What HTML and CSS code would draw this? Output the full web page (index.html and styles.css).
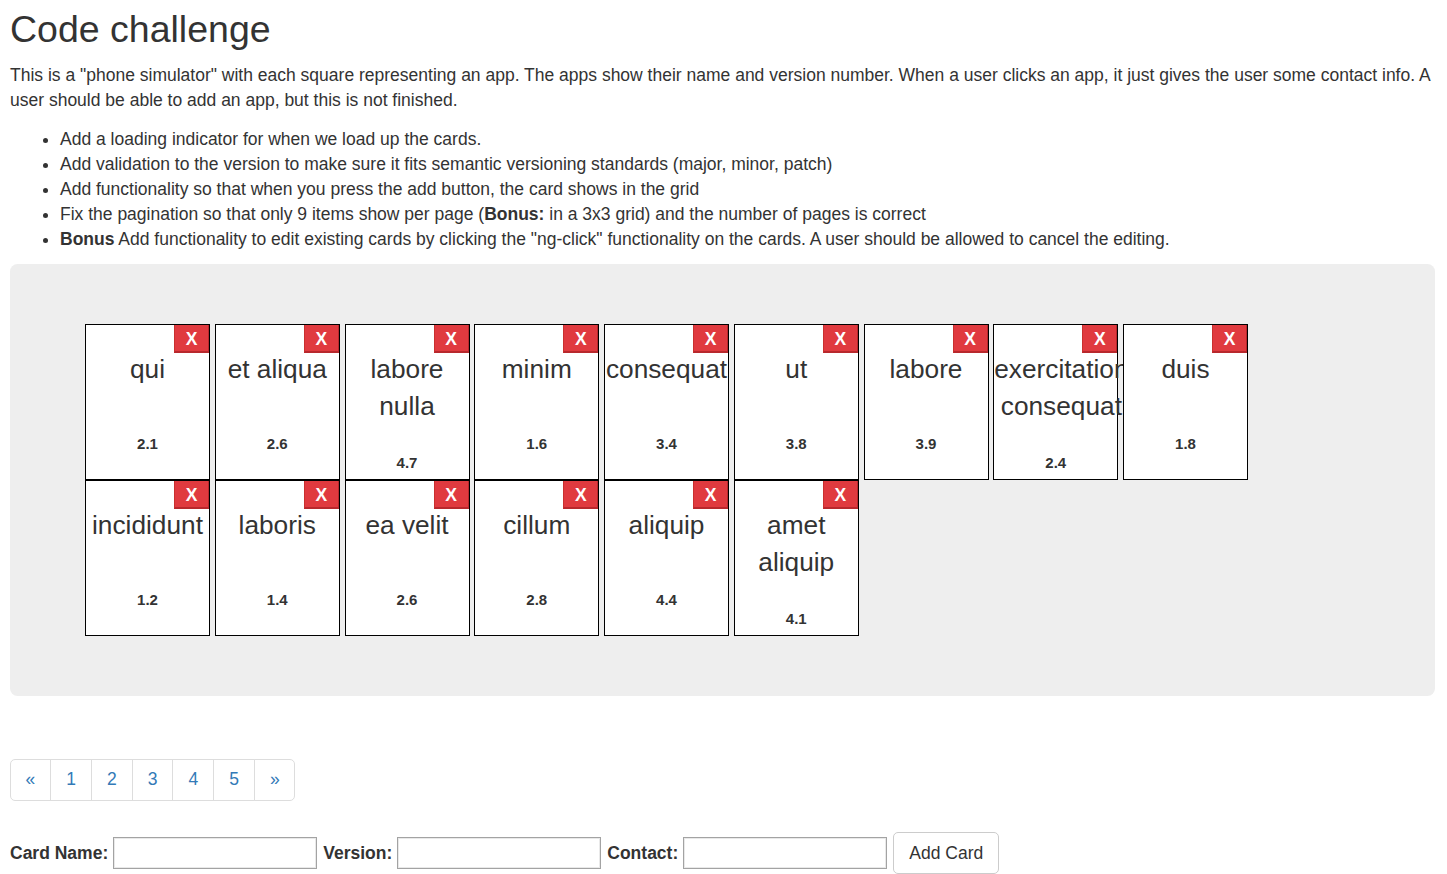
FILE: index.html
```html
<!DOCTYPE html>
<html lang="en">
<head>
<meta charset="utf-8">
<title>Code challenge</title>
<link rel="stylesheet" href="styles.css">
</head>
<body>
<h1 class="title">Code challenge</h1>
<p class="intro">This is a "phone simulator" with each square representing an app. The apps show their name and version number. When a user clicks an app, it just gives the user some contact info. A user should be able to add an app, but this is not finished.</p>
<ul class="tasks">
  <li>Add a loading indicator for when we load up the cards.</li>
  <li>Add validation to the version to make sure it fits semantic versioning standards (major, minor, patch)</li>
  <li>Add functionality so that when you press the add button, the card shows in the grid</li>
  <li>Fix the pagination so that only 9 items show per page (<b>Bonus:</b> in a 3x3 grid) and the number of pages is correct</li>
  <li><b>Bonus</b> Add functionality to edit existing cards by clicking the "ng-click" functionality on the cards. A user should be allowed to cancel the editing.</li>
</ul>

<div class="board">
  <div class="cards">
    <div class="card"><button class="delete">X</button><div class="card-name">qui</div><div class="card-version">2.1</div></div>
    <div class="card"><button class="delete">X</button><div class="card-name">et aliqua</div><div class="card-version">2.6</div></div>
    <div class="card"><button class="delete">X</button><div class="card-name">labore nulla</div><div class="card-version">4.7</div></div>
    <div class="card"><button class="delete">X</button><div class="card-name">minim</div><div class="card-version">1.6</div></div>
    <div class="card"><button class="delete">X</button><div class="card-name">consequat</div><div class="card-version">3.4</div></div>
    <div class="card"><button class="delete">X</button><div class="card-name">ut</div><div class="card-version">3.8</div></div>
    <div class="card"><button class="delete">X</button><div class="card-name">labore</div><div class="card-version">3.9</div></div>
    <div class="card"><button class="delete">X</button><div class="card-name">exercitation consequat</div><div class="card-version">2.4</div></div>
    <div class="card"><button class="delete">X</button><div class="card-name">duis</div><div class="card-version">1.8</div></div>
    <div class="card"><button class="delete">X</button><div class="card-name">incididunt</div><div class="card-version">1.2</div></div>
    <div class="card"><button class="delete">X</button><div class="card-name">laboris</div><div class="card-version">1.4</div></div>
    <div class="card"><button class="delete">X</button><div class="card-name">ea velit</div><div class="card-version">2.6</div></div>
    <div class="card"><button class="delete">X</button><div class="card-name">cillum</div><div class="card-version">2.8</div></div>
    <div class="card"><button class="delete">X</button><div class="card-name">aliquip</div><div class="card-version">4.4</div></div>
    <div class="card"><button class="delete">X</button><div class="card-name">amet aliquip</div><div class="card-version">4.1</div></div>
  </div>
</div>

<ul class="pagination">
  <li><a href="#">&laquo;</a></li>
  <li><a href="#">1</a></li>
  <li><a href="#">2</a></li>
  <li><a href="#">3</a></li>
  <li><a href="#">4</a></li>
  <li><a href="#">5</a></li>
  <li><a href="#">&raquo;</a></li>
</ul>

<form class="add-form">
  <label class="field-label" for="name">Card Name:</label>
  <input class="field-input" id="name" type="text">
  <label class="field-label" for="version">Version:</label>
  <input class="field-input" id="version" type="text">
  <label class="field-label" for="contact">Contact:</label>
  <input class="field-input" id="contact" type="text">
  <button class="add-btn" type="button">Add Card</button>
</form>
</body>
</html>
```

FILE: styles.css
```css
html, body {
  background: #fff;
}
body {
  margin: 0;
  padding: 9px 12px 0 10px;
  font-family: "Liberation Sans", Arial, Helvetica, sans-serif;
  font-size: 17.5px;
  line-height: 25px;
  color: #333;
}
.title {
  margin: 0 0 12.5px;
  font-size: 37.5px;
  font-weight: 500;
  line-height: 1.1;
}
.intro {
  margin: 0 0 14.5px;
}
.tasks {
  margin: 0 0 12px;
  padding-left: 50px;
}
.board {
  background: #eee;
  border-radius: 7.5px;
  padding: 60px 75px;
  margin-bottom: 0;
}
.cards {
  display: flex;
  flex-wrap: wrap;
  column-gap: 4.75px;
}
.card {
  position: relative;
  box-sizing: border-box;
  width: 125px;
  height: 156px;
  border: 1px solid #000;
  background: #fff;
  display: flex;
  flex-direction: column;
  text-align: center;
  font-size: 26.25px;
  line-height: 37.5px;
}
.delete {
  position: absolute;
  top: 0;
  right: 0;
  box-sizing: border-box;
  width: 35px;
  height: 28px;
  margin: 0;
  padding: 0;
  border: 0;
  border-right: 1px solid #b8282d;
  border-bottom: 2px solid #b8282d;
  border-left: 1px solid #c9302f;
  background: #e03a3f;
  color: #fff;
  font-family: "Liberation Sans", Arial, sans-serif;
  font-size: 17.5px;
  font-weight: bold;
  line-height: 28px;
  text-align: center;
}
.card-name {
  padding-top: 25.6px;
  min-width: min-content;
}
.card-version {
  margin: auto 0;
  padding-top: 20px;
  font-size: 15px;
  line-height: 21.4px;
  font-weight: bold;
}
.pagination {
  display: flex;
  width: max-content;
  list-style: none;
  margin: 62.5px 0 31.5px;
  padding: 0;
}
.pagination a {
  display: block;
  padding: 7.5px 15px;
  margin-left: -1px;
  border: 1px solid #ddd;
  background: #fff;
  color: #337ab7;
  text-decoration: none;
  line-height: 25px;
}
.pagination li:first-child a {
  margin-left: 0;
  padding-left: 14.5px;
  border-radius: 5px 0 0 5px;
}
.pagination li:last-child a {
  padding-right: 14px;
  border-radius: 0 5px 5px 0;
}
.add-form {
  display: flex;
  align-items: center;
  gap: 5px;
  margin: 0;
}
.field-label {
  font-weight: bold;
}
.field-label + .field-input {
  margin-right: 1px;
}
.field-input {
  box-sizing: border-box;
  width: 204px;
  height: 32px;
  margin: 0;
  padding: 1px 2px;
  border: 1px solid #a3a3a3;
  box-shadow: inset 0 0 0 1px #e9e9e9;
  background: #fff;
  font: inherit;
}
.add-btn {
  box-sizing: border-box;
  height: 42px;
  margin: 0;
  padding: 7.5px 15px;
  border: 1px solid #ccc;
  border-radius: 5px;
  background: #fff;
  color: #333;
  font-family: "Liberation Sans", Arial, sans-serif;
  font-size: 17.5px;
  line-height: 25px;
}
```
